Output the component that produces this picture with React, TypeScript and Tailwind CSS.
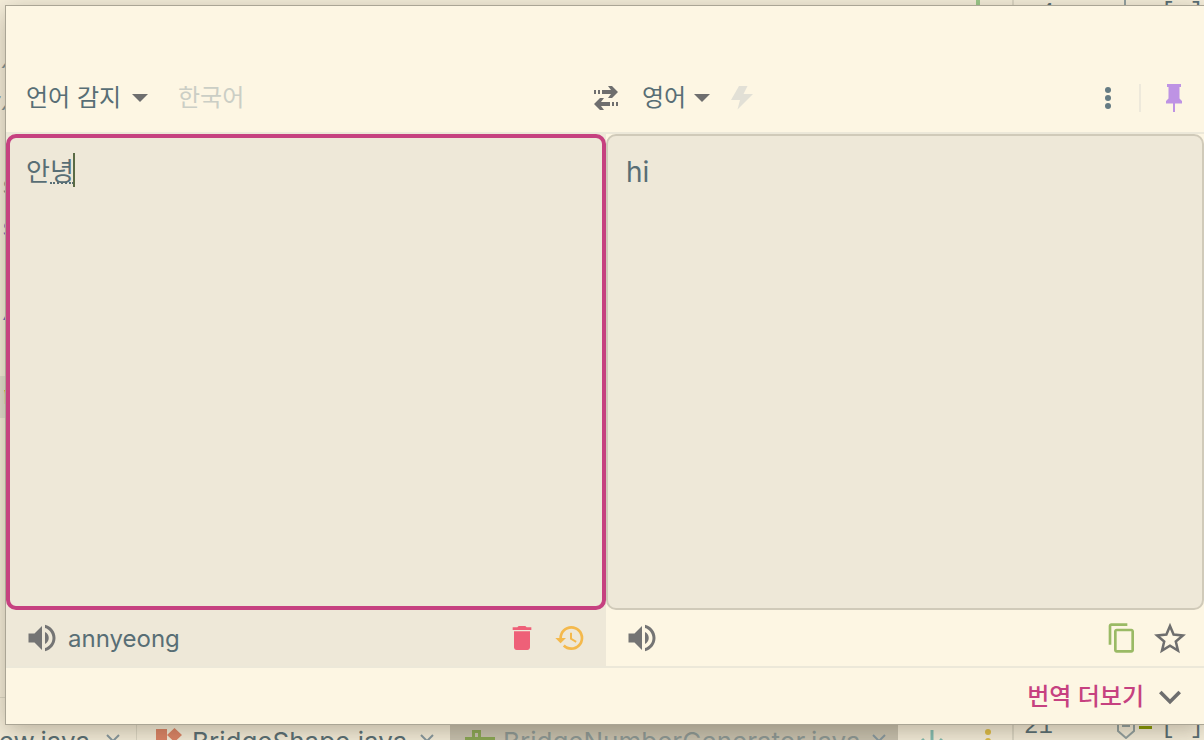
import React, { useState } from 'react';
import { MdContentCopy, MdDelete, MdExpandMore, MdHistory, MdVolumeUp } from 'react-icons/md';

const Caret: React.FC = () => (
  <svg className="pointer-events-none -ml-4 h-2 w-4 shrink-0 text-[#6e6e6e]" viewBox="0 0 16 8" fill="currentColor">
    <path d="M0 0h16L8 8z" />
  </svg>
);

const SwapIcon: React.FC = () => (
  <svg className="h-6 w-6" viewBox="0 0 24 24" fill="currentColor">
    <path d="M0 4h2v4H0zM4 4h2v4H4zM8 4h9l-3-4h4l6 6-6 6h-4l3-4H8z" />
    <path d="M24 16h-2v4h2zM20 16h-2v4h2zM16 16H7l3-4H6l-6 6 6 6h4l-3-4h9z" />
  </svg>
);

const BoltIcon: React.FC = () => (
  <svg className="h-6 w-[22px] text-[#e2e0d6]" viewBox="0 0 22 24" fill="currentColor">
    <path d="M8 0h8.500l-4 8H22L6.500 23.500 9 14H0z" />
  </svg>
);

const PinIcon: React.FC = () => (
  <svg className="h-7 w-4 text-[#be93e4]" viewBox="0 0 16 28" fill="currentColor">
    <path d="M1 0h14v3h-1.500v11.500L16 17v2.500H9V28H7v-8.500H0V17l2.500-2.500V3H1z" />
  </svg>
);

const StarIcon: React.FC = () => (
  <svg className="h-8 w-8" viewBox="0 0 32 32" fill="none" stroke="currentColor" strokeWidth="2.500">
    <path d="M16 4l3.600 8.600 9.300.8-7.100 6.100 2.200 9.100-8-4.900-8 4.900 2.200-9.100-7.100-6.100 9.300-.8z" />
  </svg>
);

const CloseIcon: React.FC = () => (
  <svg className="h-[14px] w-[14px] shrink-0 text-[#8799a0]" viewBox="0 0 14 14" stroke="currentColor" strokeWidth="2">
    <path d="M1 1l12 12M13 1L1 13" />
  </svg>
);

const EditorBackdrop: React.FC = () => (
  <div className="absolute inset-0 flex overflow-hidden bg-[#f5eedb]">
    <div className="flex min-w-0 flex-1 flex-col">
      <div className="flex flex-1 justify-between">
        <pre className="-ml-[14px] mt-10 font-['Liberation_Mono'] text-[26px] leading-[42px] text-[#839496]">
          <div className="italic">&nbsp;/</div>
          <div className="italic">r/</div>
          <div>&nbsp;</div>
          <div>&nbsp;s</div>
          <div className="text-[#6c71c4]">&nbsp;s</div>
          <div className="text-[#b58900]">:<span className="text-[#cb4b16]">:</span></div>
          <div className="text-[#6c71c4]">-/</div>
          <div>&nbsp;</div>
          <div className="bg-[#e3dfcf] text-[#859900]">rr</div>
        </pre>
        <div className="mr-8 h-3 w-1 bg-[#9bc98a]" />
      </div>
      <div className="-mb-11 flex h-[87px] shrink-0 items-center border-t border-[#ddd8c6] font-[Inter] text-[26px] text-[#586e75]">
        <div className="flex h-full w-[137px] items-center justify-end gap-4 border-r border-[#ddd8c6] pr-4">
          <span>ew.java</span>
          <CloseIcon />
        </div>
        <div className="flex h-full w-[313px] items-center gap-[10px] pl-[19px]">
          <svg className="h-[26px] w-[26px] shrink-0 text-[#dc8466]" viewBox="0 0 26 26" fill="currentColor">
            <path d="M0 1h11v11H0zM18.500 0L26 7l-7.500 7L11 7zM7 15h12v11H7z" />
          </svg>
          <span>BridgeShape.java</span>
          <span className="ml-auto mr-4"><CloseIcon /></span>
        </div>
        <div className="flex h-full w-[448px] items-center gap-2 bg-[#c9c3b1] pl-[15px] text-[#8d9996]">
          <svg className="h-[22px] w-[30px] shrink-0 text-[#8aa855]" viewBox="0 0 30 22" fill="none" stroke="currentColor" strokeWidth="3">
            <path d="M1.500 20V8.500h27V20M8.500 14V1.500h6V14M1.500 14h27M21.500 8v8" />
          </svg>
          <span>BridgeNumberGenerator.java</span>
          <span className="ml-auto mr-3"><CloseIcon /></span>
        </div>
        <svg className="ml-[18px] h-6 w-8 text-[#83bdb2]" viewBox="0 0 32 24" fill="none" stroke="currentColor" strokeWidth="3">
          <path d="M16 1v21M6 10l10 11 10-11" />
        </svg>
        <svg className="ml-auto mr-[21px] h-6 w-[6px] text-[#dfbe47]" viewBox="0 0 6 24" fill="currentColor">
          <circle cx="3" cy="3" r="3" />
          <circle cx="3" cy="12" r="3" />
          <circle cx="3" cy="21" r="3" />
        </svg>
      </div>
    </div>
    <div className="-mb-2 -mt-2 flex w-48 shrink-0 flex-col justify-between border-l-2 border-[#ddd8c6] font-['Liberation_Mono'] text-2xl leading-[42px] text-[#586e75]">
      <div className="flex items-center pl-[26px]">
        <span>4</span>
        <span className="ml-[70px] h-10 w-[2px] bg-[#93a1a1]" />
        <span className="ml-auto whitespace-pre">[ ]</span>
      </div>
      <div className="flex items-center pl-[10px]">
        <span>21</span>
        <svg className="ml-16 h-6 w-[18px] shrink-0 text-[#93a1a1]" viewBox="0 0 18 24" fill="none" stroke="currentColor" strokeWidth="2">
          <path d="M1 1h16v15l-8 7-8-7zM5 11h8" />
        </svg>
        <span className="ml-1 h-[3px] w-[13px] bg-[#859900]" />
        <span className="ml-auto whitespace-pre">[ ]</span>
      </div>
    </div>
  </div>
);

const App: React.FC = () => {
  const [text, setText] = useState('안녕');

  return (
    <div className="relative min-h-screen overflow-hidden bg-[#f5eedb] pl-[6px] pt-[6px] font-[Inter,'Noto_Sans_CJK_KR',sans-serif] text-[#586e75]">
      <EditorBackdrop />

      <main className="relative bg-[#fdf6e3] shadow-[0_0_0_1px_#aaa595,0_6px_24px_rgba(60,50,30,0.35)]">
        <header className="grid grid-cols-[588fr_24px_586fr] border-b-2 border-[#ece8d9] pt-14 text-2xl">
          <div className="flex h-[70px] items-center pl-5 pt-[2px]">
            <select aria-label="원본 언어" className="h-10 w-[122px] appearance-none bg-transparent">
              <option>언어 감지</option>
            </select>
            <Caret />
            <span className="ml-[30px] text-[#cbcec5]">한국어</span>
          </div>
          <button type="button" aria-label="언어 바꾸기" className="pt-[2px] text-[#6e6e6e]">
            <SwapIcon />
          </button>
          <div className="flex h-[70px] items-center pl-6 pt-[2px]">
            <select aria-label="번역 언어" className="h-10 w-[68px] appearance-none bg-transparent">
              <option>영어</option>
            </select>
            <Caret />
            <button type="button" aria-label="빠른 번역" className="ml-[21px]">
              <BoltIcon />
            </button>
            <button type="button" aria-label="메뉴" className="ml-auto">
              <svg className="h-[22px] w-[6px] text-[#657b83]" viewBox="0 0 6 22" fill="currentColor">
                <circle cx="3" cy="3" r="3" />
                <circle cx="3" cy="11" r="3" />
                <circle cx="3" cy="19" r="3" />
              </svg>
            </button>
            <span className="ml-7 mr-[25px] h-7 w-[2px] bg-[#eee9db]" />
            <button type="button" aria-label="고정" className="mr-[22px]">
              <PinIcon />
            </button>
          </div>
        </header>

        <div className="grid grid-cols-[600fr_598fr]">
          <section className="bg-[#eee8d8]">
            <div className="relative">
              <textarea
                aria-label="원문"
                spellCheck={false}
                value={text}
                onChange={(e) => setText(e.target.value)}
                className="block h-[476px] w-full resize-none rounded-[10px] border-4 border-[#c64180] bg-[#eee8d8] px-4 py-4 text-[26px] leading-9 outline-none"
              />
              <span className="absolute left-11 top-12 w-6 border-b-2 border-dotted border-[#586e75]" />
              <span className="absolute left-[67px] top-[19px] h-[34px] w-[2px] bg-[#5a6b45]" />
            </div>
            <div className="flex h-[58px] items-center border-b-2 border-[#ece8d9] pl-[18px] pr-5">
              <button type="button" aria-label="원문 듣기" className="text-[#747474]">
                <MdVolumeUp size={36} />
              </button>
              <span className="ml-2 pt-[2px] text-2xl">annyeong</span>
              <button type="button" aria-label="지우기" className="ml-auto text-[#ee6078]">
                <MdDelete size={32} />
              </button>
              <button type="button" aria-label="기록" className="ml-4 text-[#f4b94c]">
                <MdHistory size={32} />
              </button>
            </div>
          </section>

          <section>
            <div className="h-[476px] rounded-[10px] border-2 border-[#d0cab9] bg-[#eee8d8] px-[18px] py-[18px] text-[28px] leading-9">
              hi
            </div>
            <div className="flex h-[58px] items-center border-b-2 border-[#ece8d9] pl-[18px] pr-[18px]">
              <button type="button" aria-label="번역 듣기" className="text-[#747474]">
                <MdVolumeUp size={36} />
              </button>
              <button type="button" aria-label="복사" className="ml-auto text-[#9aba65]">
                <MdContentCopy size={32} />
              </button>
              <button type="button" aria-label="즐겨찾기" className="ml-4 text-[#6e6e6e]">
                <StarIcon />
              </button>
            </div>
          </section>
        </div>

        <footer className="flex h-14 items-center justify-end pr-3 pt-[2px]">
          <button type="button" className="flex items-center gap-1 text-2xl font-medium text-[#c64180]">
            번역 더보기
            <MdExpandMore size={44} className="text-[#6e6e6e]" />
          </button>
        </footer>
      </main>
    </div>
  );
};

export default App;
